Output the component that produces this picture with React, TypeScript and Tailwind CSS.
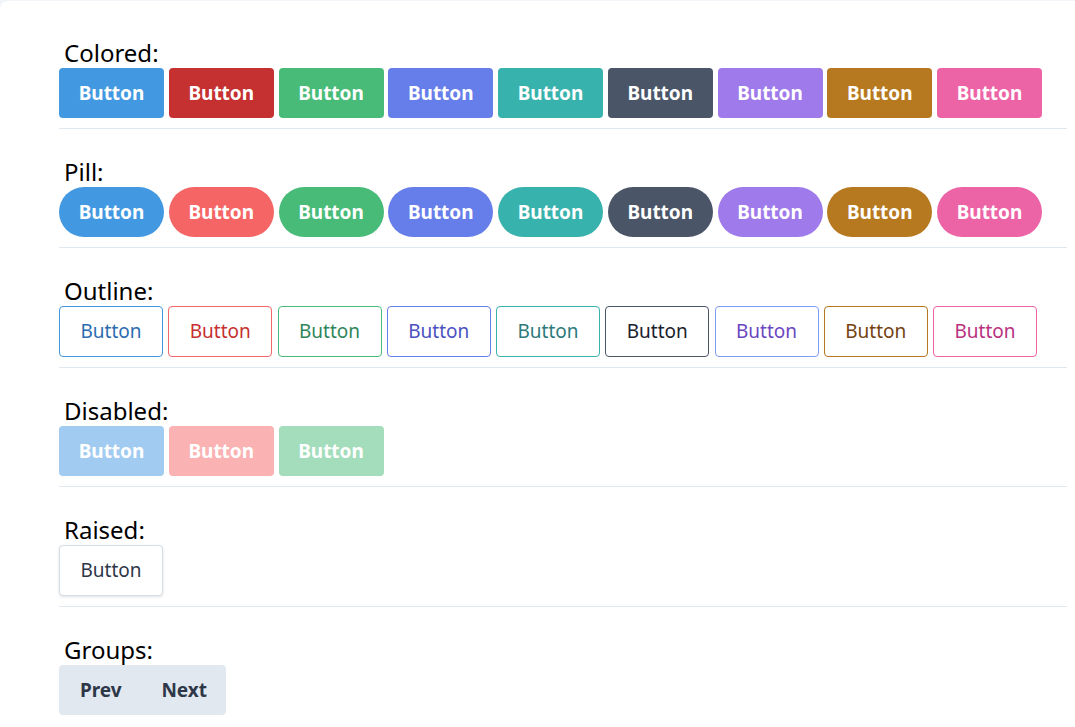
import React from 'react';

const colored = [
  'bg-[#4299e1]',
  'bg-[#c53030]',
  'bg-[#48bb78]',
  'bg-[#667eea]',
  'bg-[#38b2ac]',
  'bg-[#4a5568]',
  'bg-[#9f7aea]',
  'bg-[#b7791f]',
  'bg-[#ed64a6]',
];

const pill = [
  'bg-[#4299e1]',
  'bg-[#f56565]',
  'bg-[#48bb78]',
  'bg-[#667eea]',
  'bg-[#38b2ac]',
  'bg-[#4a5568]',
  'bg-[#9f7aea]',
  'bg-[#b7791f]',
  'bg-[#ed64a6]',
];

const outline = [
  'border-[#4299e1] text-[#2b6cb0]',
  'border-[#f56565] text-[#c53030]',
  'border-[#48bb78] text-[#2f855a]',
  'border-[#667eea] text-[#4c51bf]',
  'border-[#38b2ac] text-[#2c7a7b]',
  'border-[#4a5568] text-[#1a202c]',
  'border-[#7f9cf5] text-[#6b46c1]',
  'border-[#b7791f] text-[#744210]',
  'border-[#ed64a6] text-[#b83280]',
];

const disabled = ['bg-[#a1cbf0]', 'bg-[#fab2b2]', 'bg-[#a3ddbb]'];

function Section({ label, children, last }: { label: string; children: React.ReactNode; last?: boolean }) {
  return (
    <div className={last ? 'pt-[28px]' : 'pt-[28px] pb-[10px] border-b border-[#e2e8f0]'}>
      <div className="pl-[5px] text-[24px] leading-[30px] text-black">{label}</div>
      {children}
    </div>
  );
}

export default function App() {
  return (
    <div
      className="min-h-screen bg-[#f1f5f9] pt-px"
      style={{ fontFamily: '"Segoe UI", "Noto Sans", sans-serif' }}
    >
      <div className="min-h-[726px] bg-white rounded-tl-lg pl-[59px] pr-[8px] pt-[9px]">
        <Section label="Colored:">
          <div className="flex gap-[4.75px]">
            {colored.map((c, i) => (
              <button key={i} className={`${c} w-[105px] h-[50px] rounded text-white font-bold text-[19px]`}>
                Button
              </button>
            ))}
          </div>
        </Section>

        <Section label="Pill:">
          <div className="flex gap-[4.75px]">
            {pill.map((c, i) => (
              <button key={i} className={`${c} w-[105px] h-[50px] rounded-full text-white font-bold text-[19px]`}>
                Button
              </button>
            ))}
          </div>
        </Section>

        <Section label="Outline:">
          <div className="flex gap-[5.25px]">
            {outline.map((c, i) => (
              <button key={i} className={`${c} w-[104px] h-[51px] rounded border bg-white text-[19px]`}>
                Button
              </button>
            ))}
          </div>
        </Section>

        <Section label="Disabled:">
          <div className="flex gap-[4.75px]">
            {disabled.map((c, i) => (
              <button key={i} disabled className={`${c} w-[105px] h-[50px] rounded text-white font-bold text-[19px] cursor-not-allowed`}>
                Button
              </button>
            ))}
          </div>
        </Section>

        <Section label="Raised:">
          <button className="w-[104px] h-[51px] rounded border border-[#d5dde6] bg-white text-[#2d3748] text-[19px] shadow-[0_1px_3px_rgba(0,0,0,0.12)]">
            Button
          </button>
        </Section>

        <Section label="Groups:" last>
          <div className="flex w-[167px] h-[50px] rounded bg-[#e2e8f0]">
            <button className="flex-1 font-bold text-[19px] text-[#2d3748]">Prev</button>
            <button className="flex-1 font-bold text-[19px] text-[#2d3748]">Next</button>
          </div>
        </Section>
      </div>
    </div>
  );
}
